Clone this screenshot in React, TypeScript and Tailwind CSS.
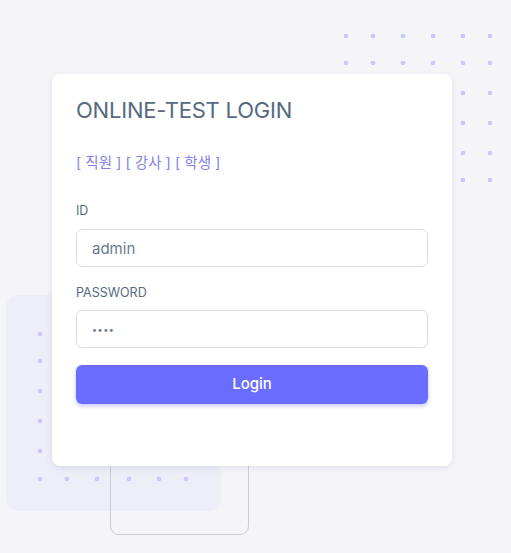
import { useState } from "react";

const topDotsX = [346, 373, 403, 433, 463, 490];
const topDotsY = [36, 63, 93, 123, 153, 180];
const bottomDotsX = [40, 67, 97, 129, 159, 186];
const bottomDotsY = [334, 361, 391, 421, 451, 479];

function Dots({ xs, ys }: { xs: number[]; ys: number[] }) {
  return (
    <>
      {ys.map((y) =>
        xs.map((x) => <circle key={`${x}-${y}`} cx={x} cy={y} r={2.3} fill="#c8c8fa" />)
      )}
    </>
  );
}

export default function App() {
  const [id, setId] = useState("admin");
  const [pw, setPw] = useState("1234");

  return (
    <div
      className="relative w-full min-h-[553px] overflow-hidden bg-[#f5f5f9]"
      style={{ fontFamily: "Inter, 'Noto Sans', 'Noto Sans CJK KR', sans-serif" }}
    >
      {/* background decoration */}
      <div className="absolute left-[6px] top-[295px] w-[215px] h-[216px] rounded-[12px] bg-[#eeeef9]" />
      <div className="absolute left-[110px] top-[380px] w-[139px] h-[155px] rounded-[9px] border border-[#c9ccd2]" />
      <svg className="absolute left-0 top-0" width={511} height={553}>
        <Dots xs={topDotsX} ys={topDotsY} />
        <Dots xs={bottomDotsX} ys={bottomDotsY} />
      </svg>

      <div className="relative pl-[52px] pt-[74px]">
        <div className="w-[400px] rounded-[8px] bg-white px-6 pt-5 pb-[62px] shadow-[0_2px_6px_0_rgba(67,89,113,0.12)]">
          <h4 className="text-[22px] leading-8 text-[#566a7f] tracking-[-0.2px]">ONLINE-TEST LOGIN</h4>

          <p className="mt-[25px] text-[14.5px] leading-6 text-[#7f82ea]">
            <a href="#">[ 직원 ]</a> <a href="#">[ 강사 ]</a> <a href="#">[ 학생 ]</a>
          </p>

          <label className="mt-[27px] block text-[12.5px] leading-[18px] uppercase text-[#566a7f]">ID</label>
          <input
            value={id}
            onChange={(e) => setId(e.target.value)}
            className="mt-[9px] block w-full h-[38px] rounded-[6px] border border-[#d9dee3] px-[15px] text-[15px] text-[#697a8d] outline-none"
          />

          <label className="mt-[17px] block text-[12.5px] leading-[18px] uppercase text-[#566a7f]">Password</label>
          <input
            type="password"
            value={pw}
            onChange={(e) => setPw(e.target.value)}
            className="mt-2 block w-full h-[38px] rounded-[6px] border border-[#d9dee3] px-[15px] text-[9px] tracking-[0.5px] text-[#697a8d] outline-none"
          />

          <button className="mt-[17px] block w-full h-[39px] rounded-[6px] bg-[#696cff] text-[15px] font-medium text-white shadow-[0_2px_4px_0_rgba(105,108,255,0.4)]">
            Login
          </button>
        </div>
      </div>
    </div>
  );
}
